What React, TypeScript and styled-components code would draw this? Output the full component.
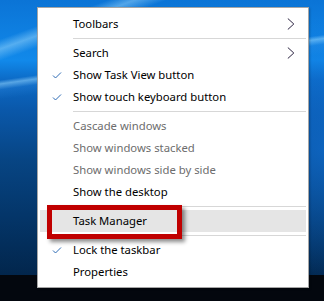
import React from "react";
import styled, { createGlobalStyle } from "styled-components";

const Global = createGlobalStyle`
  html, body { margin: 0; padding: 0; }
  body { width: 324px; height: 301px; overflow: hidden; }
`;

const Screen = styled.div`
  position: relative;
  width: 324px;
  height: 301px;
  display: flex;
  flex-direction: column;
  font-family: "Noto Sans", "Open Sans", sans-serif;
`;

const Desktop = styled.div`
  flex: 1;
  background:
    linear-gradient(172deg, transparent 0%, transparent 25%, rgba(150, 215, 255, 0.55) 26.2%, rgba(60, 150, 235, 0.2) 28%, transparent 31%),
    linear-gradient(160deg, transparent 0%, transparent 10%, rgba(170, 225, 255, 0.45) 12.5%, transparent 15.5%),
    radial-gradient(ellipse 60% 70% at 100% 55%, rgba(16, 110, 210, 0.7), transparent 70%),
    linear-gradient(180deg, #0b74d6 0%, #1189ea 22%, #0c6ac6 29%, #0a58aa 40%, #074584 58%, #04366a 78%, #02264c 100%);
`;

const Taskbar = styled.div`
  height: 26px;
  background: #03070e;
`;

const Menu = styled.div`
  position: absolute;
  left: 37px;
  top: 7px;
  width: 266px;
  padding: 5px 2px 4px 2px;
  background: #ffffff;
  border: 1px solid #a6a6a6;
  box-shadow: 1px 1px 2px rgba(0, 0, 0, 0.25);
  display: flex;
  flex-direction: column;
`;

const Row = styled.div<{ $disabled?: boolean; $hover?: boolean }>`
  height: 22px;
  display: grid;
  grid-template-columns: 33px 1fr 20px;
  align-items: center;
  font-size: 11.3px;
  color: ${(p) => (p.$disabled ? "#6d6d6d" : "#000000")};
  background: ${(p) => (p.$hover ? "#e5e5e5" : "transparent")};
  white-space: nowrap;
`;

const CheckCell = styled.div`
  display: flex;
  justify-content: center;
  padding-left: 1px;
`;

const Label = styled.span`
  line-height: 22px;
`;

const ArrowCell = styled.div`
  display: flex;
  justify-content: flex-start;
  padding-left: 1px;
`;

const Separator = styled.div`
  height: 7px;
  display: flex;
  align-items: center;
  padding-left: 33px;
  &::after {
    content: "";
    flex: 1;
    height: 1px;
    background: #d7d7d7;
  }
`;

const Callout = styled.div`
  position: absolute;
  left: 47px;
  top: 205px;
  width: 125px;
  height: 24px;
  border: 5px solid #c00000;
  box-shadow: 3px 3px 4px rgba(0, 0, 0, 0.45);
  pointer-events: none;
`;

const Check = () => (
  <svg width="10" height="8" viewBox="0 0 10 8">
    <polyline points="1,4.5 3.5,7 9,1.5" fill="none" stroke="#2d6bb5" strokeWidth="1" />
  </svg>
);

const Chevron = () => (
  <svg width="8" height="12" viewBox="0 0 8 12">
    <polyline points="0.8,0.5 6.8,6 0.8,11.5" fill="none" stroke="#2a2240" strokeWidth="1" />
  </svg>
);

type Item =
  | { sep: true }
  | { label: string; checked?: boolean; disabled?: boolean; sub?: boolean; hover?: boolean };

const items: Item[] = [
  { label: "Toolbars", sub: true },
  { sep: true },
  { label: "Search", sub: true },
  { label: "Show Task View button", checked: true },
  { label: "Show touch keyboard button", checked: true },
  { sep: true },
  { label: "Cascade windows", disabled: true },
  { label: "Show windows stacked", disabled: true },
  { label: "Show windows side by side", disabled: true },
  { label: "Show the desktop" },
  { sep: true },
  { label: "Task Manager", hover: true },
  { sep: true },
  { label: "Lock the taskbar", checked: true },
  { label: "Properties" },
];

export default function App() {
  return (
    <>
      <Global />
      <Screen>
        <Desktop />
        <Taskbar />
        <Menu>
          {items.map((it, i) =>
            "sep" in it ? (
              <Separator key={i} />
            ) : (
              <Row key={i} $disabled={it.disabled} $hover={it.hover}>
                <CheckCell>{it.checked ? <Check /> : null}</CheckCell>
                <Label>{it.label}</Label>
                <ArrowCell>{it.sub ? <Chevron /> : null}</ArrowCell>
              </Row>
            )
          )}
        </Menu>
        <Callout />
      </Screen>
    </>
  );
}
